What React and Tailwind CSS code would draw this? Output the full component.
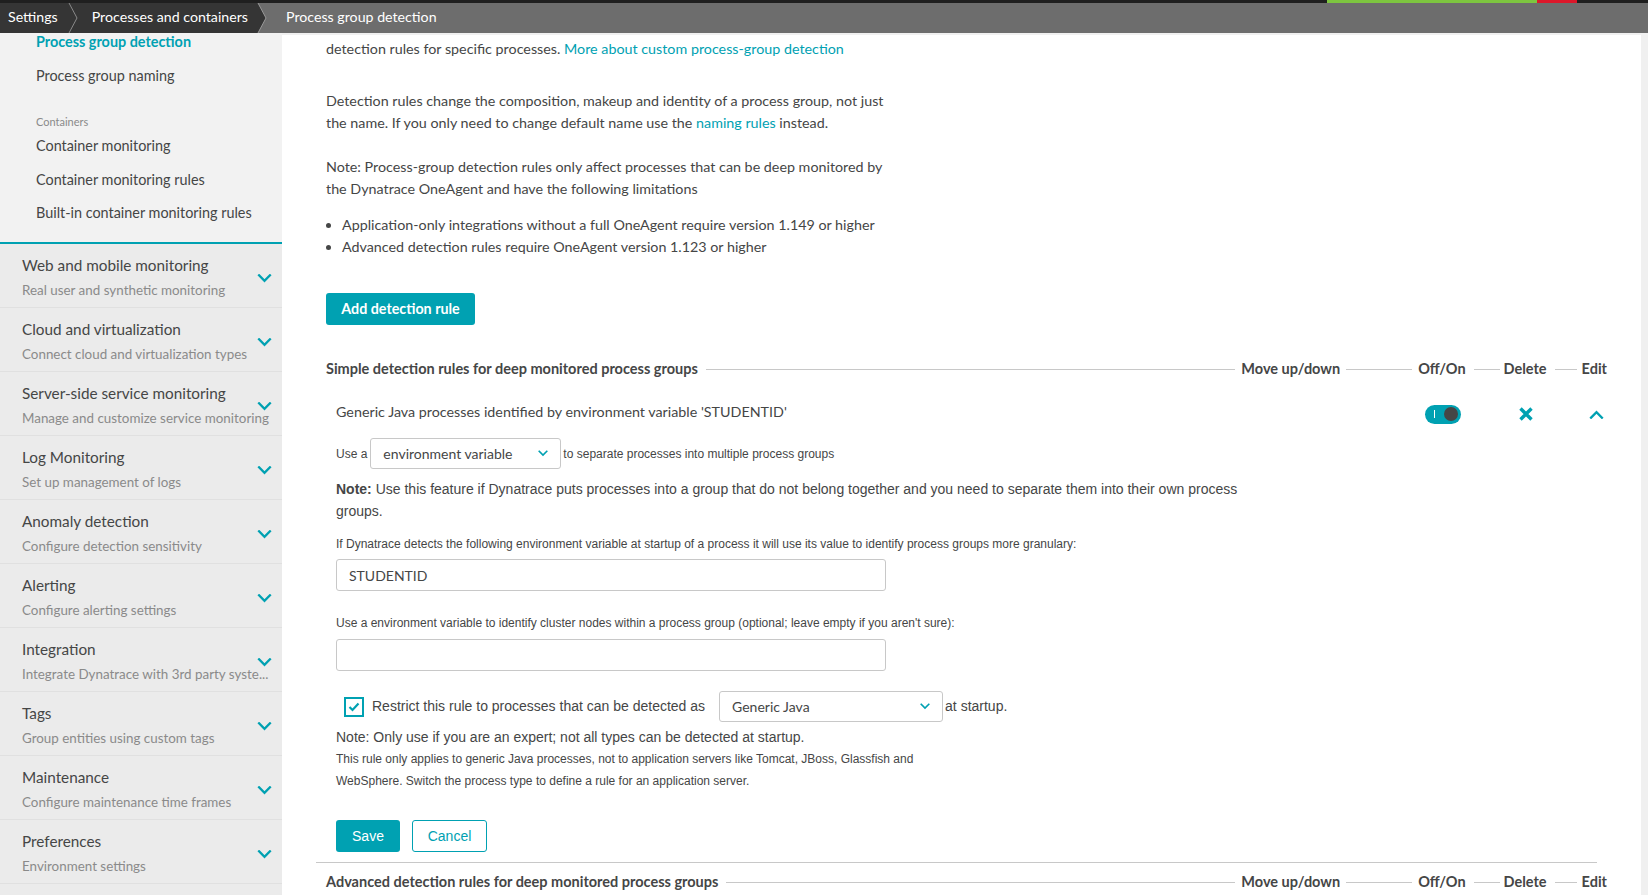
import React from 'react';

const Chevron = ({ up = false, className = '' }) => (
  <svg viewBox="0 0 16 10" className={className} fill="none" stroke="currentColor" strokeWidth="2.6" strokeLinecap="square">
    {up ? <path d="M2 8.5 L8 2.5 L14 8.5" /> : <path d="M2 1.5 L8 7.5 L14 1.5" />}
  </svg>
);

const secciones = [
  ['Web and mobile monitoring', 'Real user and synthetic monitoring'],
  ['Cloud and virtualization', 'Connect cloud and virtualization types'],
  ['Server-side service monitoring', 'Manage and customize service monitoring'],
  ['Log Monitoring', 'Set up management of logs'],
  ['Anomaly detection', 'Configure detection sensitivity'],
  ['Alerting', 'Configure alerting settings'],
  ['Integration', 'Integrate Dynatrace with 3rd party syste...'],
  ['Tags', 'Group entities using custom tags'],
  ['Maintenance', 'Configure maintenance time frames'],
  ['Preferences', 'Environment settings'],
];

const Line = ({ className = '' }) => <div className={`h-px bg-[#c8c8c8] ${className}`}></div>;

// Cabecera de tabla de reglas con columnas a la derecha
const RulesHeader = ({ title }) => (
  <div className="flex items-center h-[26px] text-[14.5px] font-bold text-[#454646]">
    <span>{title}</span>
    <Line className="flex-1 ml-[8px] mr-[6px]" />
    <span>Move up/down</span>
    <Line className="w-[66px] mx-[6px]" />
    <span>Off/On</span>
    <Line className="w-[26px] ml-[8px] mr-[4px]" />
    <span>Delete</span>
    <Line className="w-[22px] ml-[8px] mr-[5px]" />
    <span className="mr-[15px]">Edit</span>
  </div>
);

const Select = ({ value, className = '' }) => (
  <div className={`flex items-center justify-between border border-[#c8c8c8] rounded-[3px] bg-white px-[12px] text-[14px] text-[#454646] ${className}`} style={{ fontFamily: 'Lato, sans-serif' }}>
    <span>{value}</span>
    <Chevron className="w-[10px] h-[7px] text-[#00a1b2]" />
  </div>
);

export default function App() {
  return (
    <div className="w-[1648px] h-[895px] overflow-hidden flex flex-col bg-[#f0f0f0]" style={{ fontFamily: 'Lato, "Open Sans", sans-serif' }}>
      {/* Barra superior */}
      <div className="h-[3px] flex bg-[#1f1f1f]">
        <div className="w-[1327px]"></div>
        <div className="w-[210px] bg-[#7dc540]"></div>
        <div className="w-[40px] bg-[#dc172a]"></div>
      </div>
      <div className="h-[30px] flex items-stretch bg-[#6d6d6d] text-white text-[14.2px]">
        <div className="flex items-center bg-[#353535] pl-[8px] pr-[6px] pb-[2px]">
          <span>Settings</span>
          <svg width="14" height="30" viewBox="0 0 14 30" className="ml-[9px] mt-[2px]">
            <path d="M2 0 L10 15 L2 30" stroke="#8a8a8a" strokeWidth="1" fill="none" />
          </svg>
          <span className="ml-[11px]">Processes and containers</span>
        </div>
        <svg width="14" height="30" viewBox="0 0 14 30">
          <path d="M-8 0 L4 0 L12 15 L4 30 L-8 30 Z" fill="#353535" />
          <path d="M4 0 L12 15 L4 30" stroke="#9a9a9a" strokeWidth="1" fill="none" />
        </svg>
        <span className="flex items-center ml-[18px] pb-[2px]">Process group detection</span>
      </div>

      <div className="flex flex-1 min-h-0">
        {/* Barra lateral */}
        <div className="w-[282px] flex flex-col bg-[#ebebeb]">
          <div className="bg-[#f2f2f2] pl-[36px] pb-[19px] text-[14.4px] text-[#454646] border-b-2 border-[#00a1b2]">
            <div className="h-[20px] flex items-center font-bold text-[#00a1b2] -mt-[1px]">Process group detection</div>
            <div className="h-[20px] flex items-center mt-[14px]">Process group naming</div>
            <div className="h-[16px] flex items-center mt-[28px] text-[11px] text-[#8a8a8a]">Containers</div>
            <div className="h-[20px] flex items-center mt-[6px]">Container monitoring</div>
            <div className="h-[20px] flex items-center mt-[14px]">Container monitoring rules</div>
            <div className="h-[20px] flex items-center mt-[13px]">Built-in container monitoring rules</div>
          </div>
          {secciones.map(([titulo, sub]) => (
            <div key={titulo} className="h-[64px] shrink-0 flex items-start border-b border-[#e0e0e0] pl-[22px] pr-[10px] pt-[11px]">
              <div className="flex-1 min-w-0 whitespace-nowrap">
                <div className="text-[15.3px] text-[#454646] leading-[20px]">{titulo}</div>
                <div className="text-[13.4px] text-[#8a8a8a] leading-[20px] mt-[5px]">{sub}</div>
              </div>
              <Chevron className="w-[15px] h-[9px] text-[#00a1b2] shrink-0 mt-[19px] relative" />
            </div>
          ))}
        </div>

        {/* Contenido principal */}
        <div className="flex-1 flex min-w-0">
          <div className="flex-1 bg-white mt-[2px] pl-[44px] pr-[19px] text-[#454646] overflow-hidden">
            <div className="text-[14.3px] leading-[22px] w-[580px]">
              <p className="mt-[3px]">detection rules for specific processes. <span className="text-[#00a1b2]">More about custom process-group detection</span></p>
              <p className="mt-[30px]">Detection rules change the composition, makeup and identity of a process group, not just the name. If you only need to change default name use the <span className="text-[#00a1b2]">naming rules</span> instead.</p>
              <p className="mt-[22px]">Note: Process-group detection rules only affect processes that can be deep monitored by the Dynatrace OneAgent and have the following limitations</p>
              <ul className="mt-[14px] pl-[16px] list-disc leading-[22px]">
                <li>Application-only integrations without a full OneAgent require version 1.149 or higher</li>
                <li>Advanced detection rules require OneAgent version 1.123 or higher</li>
              </ul>
            </div>
            <button className="mt-[35px] h-[32px] w-[149px] rounded-[3px] bg-[#00a1b2] text-white text-[14.3px] font-bold">Add detection rule</button>

            <div className="mt-[31px]">
              <RulesHeader title="Simple detection rules for deep monitored process groups" />
            </div>

            {/* Regla desplegada */}
            <div className="pl-[10px]">
              <div className="flex items-center h-[34px] mt-[13px] text-[14.3px]">
                <span className="flex-1">Generic Java processes identified by environment variable 'STUDENTID'</span>
                <div className="w-[36px] h-[19px] rounded-full bg-[#00a1b2] flex items-center justify-between px-[3px] mt-[4px]">
                  <span className="w-[1px] h-[8px] bg-white ml-[6px]"></span>
                  <span className="w-[14px] h-[14px] rounded-full bg-[#454646]"></span>
                </div>
                <svg width="16" height="16" viewBox="0 0 16 16" className="ml-[57px] mt-[4px]">
                  <path d="M2.5 2.5 L13.5 13.5 M13.5 2.5 L2.5 13.5" stroke="#00a1b2" strokeWidth="3.4" />
                </svg>
                <Chevron up className="w-[15px] h-[9px] text-[#00a1b2] ml-[55px] mr-[18px] mt-[4px]" />
              </div>

              <div style={{ fontFamily: '"Liberation Sans", Arial, sans-serif' }}>
                <div className="flex items-center mt-[9px] text-[12px]">
                  <span>Use a</span>
                  <Select value="environment variable" className="w-[191px] h-[31px] ml-[3px] mr-[2px]" />
                  <span>to separate processes into multiple process groups</span>
                </div>
                <p className="mt-[9px] text-[14px] leading-[22px] w-[910px]"><b>Note:</b> Use this feature if Dynatrace puts processes into a group that do not belong together and you need to separate them into their own process groups.</p>
                <p className="mt-[13px] text-[12px]">If Dynatrace detects the following environment variable at startup of a process it will use its value to identify process groups more granulary:</p>
                <div className="mt-[6px] w-[550px] h-[32px] border border-[#c8c8c8] rounded-[3px] flex items-center px-[12px] text-[14px]" style={{ fontFamily: 'Lato, sans-serif' }}>STUDENTID</div>
                <p className="mt-[23px] text-[12px]">Use a environment variable to identify cluster nodes within a process group (optional; leave empty if you aren't sure):</p>
                <div className="mt-[7px] w-[550px] h-[32px] border border-[#c8c8c8] rounded-[3px]"></div>

                <div className="flex items-center mt-[20px] text-[14px]">
                  <div className="ml-[8px] w-[20px] h-[20px] border-2 border-[#00a1b2] flex items-center justify-center">
                    <svg width="12" height="10" viewBox="0 0 12 10">
                      <path d="M1.5 5 L4.5 8 L10.5 1.5" stroke="#00a1b2" strokeWidth="2.2" fill="none" />
                    </svg>
                  </div>
                  <span className="ml-[8px]">Restrict this rule to processes that can be detected as</span>
                  <Select value="Generic Java" className="w-[224px] h-[31px] ml-[14px] mr-[2px]" />
                  <span>at startup.</span>
                </div>
                <p className="mt-[5px] text-[14px]">Note: Only use if you are an expert; not all types can be detected at startup.</p>
                <p className="mt-[0px] text-[12px] leading-[22px] w-[600px]">This rule only applies to generic Java processes, not to application servers like Tomcat, JBoss, Glassfish and WebSphere. Switch the process type to define a rule for an application server.</p>

                <div className="flex gap-[12px] mt-[28px]">
                  <button className="h-[32px] w-[64px] rounded-[3px] bg-[#00a1b2] text-white text-[14px]">Save</button>
                  <button className="h-[32px] w-[75px] rounded-[3px] border border-[#00a1b2] text-[#00a1b2] text-[14px] bg-white">Cancel</button>
                </div>
              </div>
            </div>

            <Line className="mt-[10px] -ml-[10px] mr-[25px]" />
            <div className="mt-[6px]">
              <RulesHeader title="Advanced detection rules for deep monitored process groups" />
            </div>
          </div>
          <div className="w-[7px] bg-[#f0f0f0]"></div>
        </div>
      </div>
    </div>
  );
}
